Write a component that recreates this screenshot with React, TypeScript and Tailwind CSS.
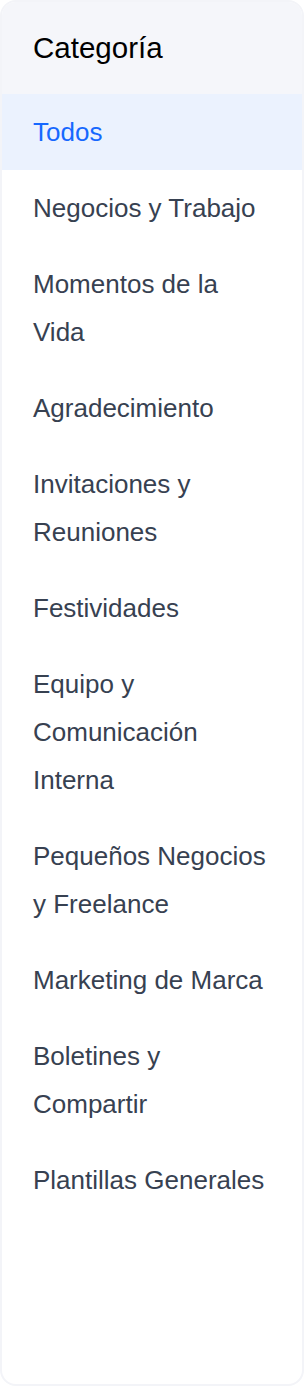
import React from "react";

const categories = [
  "Todos",
  "Negocios y Trabajo",
  "Momentos de la Vida",
  "Agradecimiento",
  "Invitaciones y Reuniones",
  "Festividades",
  "Equipo y Comunicación Interna",
  "Pequeños Negocios y Freelance",
  "Marketing de Marca",
  "Boletines y Compartir",
  "Plantillas Generales",
];

export default function App() {
  const active = "Todos";

  return (
    <div className="min-h-[1386px] flex flex-col bg-white font-['Liberation_Sans',Arial,sans-serif]">
      <aside className="flex-1 flex flex-col border-2 border-[#f3f4f8] rounded-2xl overflow-hidden bg-white">
        {/* Header */}
        <div className="h-[92px] flex items-center pl-[31px] bg-[#f5f6fa]">
          <h2 className="text-[29.5px] leading-none text-black">Categoría</h2>
        </div>

        {/* List */}
        <ul className="flex flex-col">
          {categories.map((c) => (
            <li
              key={c}
              className={
                c === active
                  ? "pl-[31px] pr-[31px] py-[14px] text-[26px] leading-[48px] text-[#1668ff] bg-[#ebf2fe]"
                  : "pl-[31px] pr-[31px] py-[14px] text-[26px] leading-[48px] text-[#374151]"
              }
            >
              {c}
            </li>
          ))}
        </ul>
      </aside>
    </div>
  );
}
